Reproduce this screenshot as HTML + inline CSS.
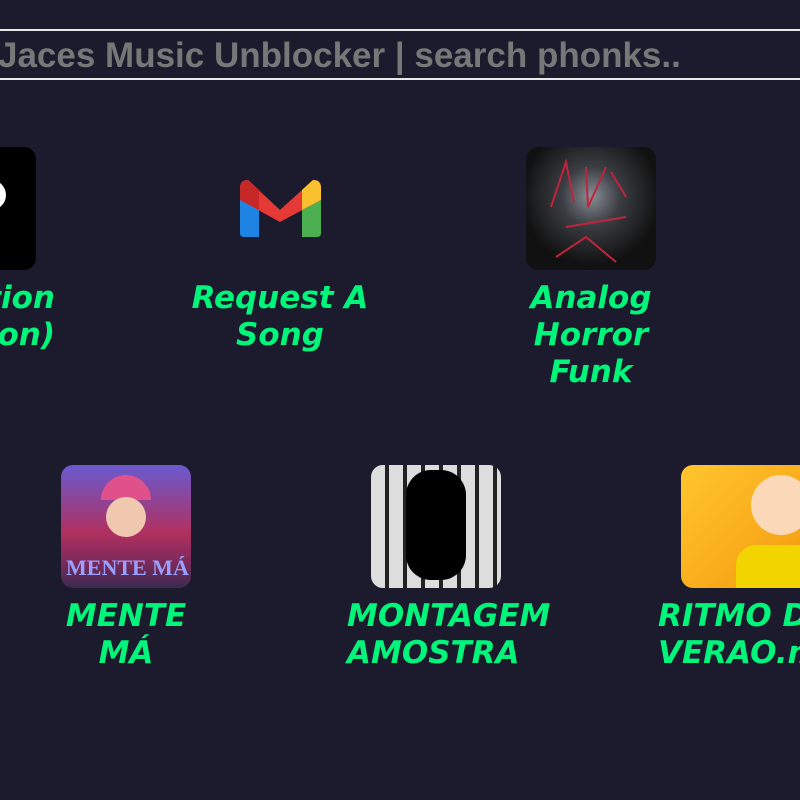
<!DOCTYPE html>
<html style="overflow:hidden"><head><style>
body{margin:0;width:800px;height:800px;background:#1c1b2e;overflow:hidden;position:relative;font-family:"Liberation Sans",sans-serif}
#wrap{position:absolute;left:0;top:0;width:800px;height:800px;overflow:hidden}
.line{position:absolute;left:0;width:800px;height:2px;background:#e8e8e8}
.title{position:absolute;left:-2px;top:36px;font:bold 35px "Liberation Sans",sans-serif;color:#777;white-space:nowrap}
.t{position:absolute;width:300px;text-align:center;font:italic bold 31px "DejaVu Sans",sans-serif;color:#00f57a;line-height:37px;white-space:nowrap}
.img{position:absolute;width:130px;height:123px;border-radius:12px;overflow:hidden}
</style></head><body><div id="wrap">
<div class="line" style="top:29px"></div>
<div class="line" style="top:78px"></div>
<div class="title">Jaces Music Unblocker | search phonks..</div>

<div class="img" style="left:-94px;top:147px;background:#000"></div>
<div style="position:absolute;left:-10px;top:180px;width:16px;height:30px;background:#fff;border-radius:0 15px 15px 0"></div>
<div class="t" style="left:-245px;top:280px;text-align:right">Station<br>(Version)</div>

<svg style="position:absolute;left:240px;top:180px" width="81" height="57" viewBox="0 0 81 57">
<path d="M0 8Q0 0 8 0L19 10V57H4Q0 57 0 53Z" fill="#1e84e4"/>
<path d="M81 8Q81 0 73 0L62 10V57H77Q81 57 81 53Z" fill="#4caf50"/>
<path d="M0 8Q0 0 8 0L40 30L73 0Q81 0 81 8V20L40 42L0 20Z" fill="#e53935"/>
<path d="M62 10L73 0Q81 0 81 8V20L62 30Z" fill="#fbc02d"/>
<path d="M0 8Q0 0 8 0L19 10V30L0 20Z" fill="#c62828"/>
</svg>
<div class="t" style="left:130px;top:280px">Request A<br>Song</div>

<div class="img" style="left:526px;top:147px;background:radial-gradient(circle at 50% 40%,#8a8f96 0,#3a3d42 30%,#111 70%)">
<svg width="130" height="123"><g stroke="#c0243c" stroke-width="2" fill="none"><path d="M25 60L40 15L48 55M60 20L62 60L80 20M85 25L100 50M30 110L60 90L90 115M40 80L100 70"/></g></svg></div>
<div class="t" style="left:441px;top:280px">Analog<br>Horror<br>Funk</div>

<div class="img" style="left:61px;top:465px;background:linear-gradient(180deg,#6a5ad0 0,#b03060 55%,#7a2a5a 80%,#3a2a50 100%)">
<div style="position:absolute;left:40px;top:10px;width:50px;height:25px;background:#e0508a;border-radius:25px 25px 0 0"></div>
<div style="position:absolute;left:45px;top:32px;width:40px;height:40px;background:#f0c8b0;border-radius:50%"></div>
<div style="position:absolute;left:5px;top:90px;font:bold 22px 'Liberation Serif',serif;color:#9aa0ff;white-space:nowrap">MENTE MÁ</div></div>
<div class="t" style="left:-24px;top:598px">MENTE<br>MÁ</div>

<div class="img" style="left:371px;top:465px;background:repeating-linear-gradient(90deg,#ddd 0 14px,#222 14px 18px)">
<div style="position:absolute;left:35px;top:5px;width:60px;height:110px;background:#000;border-radius:25px"></div></div>
<div class="t" style="left:347px;top:598px;text-align:left;width:260px">MONTAGEM<br>AMOSTRA</div>

<div class="img" style="left:681px;top:465px;width:119px;border-radius:12px 0 0 12px;background:linear-gradient(135deg,#ffc62e,#f59a10)">
<div style="position:absolute;left:70px;top:10px;width:60px;height:60px;background:#fbd9b8;border-radius:50%"></div>
<div style="position:absolute;left:55px;top:80px;width:80px;height:50px;background:#f2d500;border-radius:20px 20px 0 0"></div></div>
<div class="t" style="left:658px;top:598px;text-align:left;width:142px;overflow:hidden">RITMO DE<br>VERAO.mp3</div>
</div></body></html>
